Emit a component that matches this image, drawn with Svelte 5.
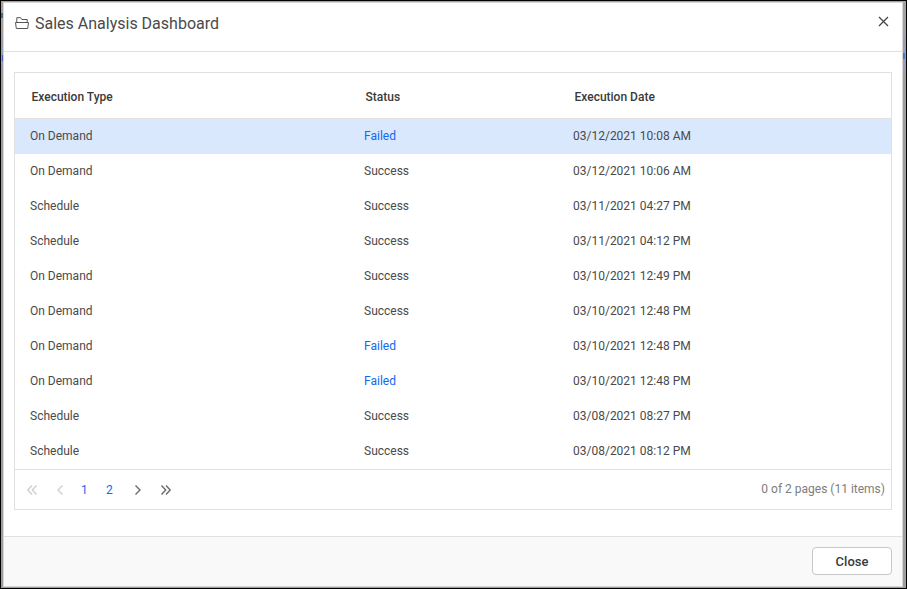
<script>
  const rows = [
    ['On Demand', 'Failed', '03/12/2021 10:08 AM'],
    ['On Demand', 'Success', '03/12/2021 10:06 AM'],
    ['Schedule', 'Success', '03/11/2021 04:27 PM'],
    ['Schedule', 'Success', '03/11/2021 04:12 PM'],
    ['On Demand', 'Success', '03/10/2021 12:49 PM'],
    ['On Demand', 'Success', '03/10/2021 12:48 PM'],
    ['On Demand', 'Failed', '03/10/2021 12:48 PM'],
    ['On Demand', 'Failed', '03/10/2021 12:48 PM'],
    ['Schedule', 'Success', '03/08/2021 08:27 PM'],
    ['Schedule', 'Success', '03/08/2021 08:12 PM']
  ];
  let selected = $state(0);
</script>

<div class="window">
  <div class="dialog">
    <header>
      <svg class="folder" width="14" height="13" viewBox="0 0 14 13" fill="none" stroke="#555" stroke-linejoin="round">
        <path d="M1.8 5.5V.7H5.6L6.8 2.5H12.2V5.5M.5 5.5H13.5L12.7 11.5H1.3Z" />
      </svg>
      <h1>Sales Analysis Dashboard</h1>
      <button class="x" aria-label="Close dialog">
        <svg width="11" height="11" viewBox="0 0 11 11" fill="none" stroke="#444" stroke-width="1.25"><path d="M1 1L10 10M10 1L1 10" /></svg>
      </button>
    </header>
    <main>
      <div class="grid">
        <div class="row head">
          <span>Execution Type</span><span>Status</span><span>Execution Date</span>
        </div>
        {#each rows as [type, status, date], i}
          <div class="row" class:selected={i === selected}>
            <span>{type}</span><span class:failed={status === 'Failed'}>{status}</span><span>{date}</span>
          </div>
        {/each}
        <div class="pager">
          <svg class="first" width="12" height="12" viewBox="0 0 12 12"><path d="M6 1.5L1.8 6L6 10.5M10.5 1.5L6.3 6L10.5 10.5" /></svg>
          <svg class="prev" width="8" height="12" viewBox="0 0 8 12"><path d="M6.5 1.5L2 6L6.5 10.5" /></svg>
          <span class="num one">1</span>
          <span class="num two">2</span>
          <svg class="next" width="8" height="12" viewBox="0 0 8 12"><path d="M1.5 1.5L6 6L1.5 10.5" /></svg>
          <svg class="last" width="12" height="12" viewBox="0 0 12 12"><path d="M1.5 1.5L5.7 6L1.5 10.5M6 1.5L10.2 6L6 10.5" /></svg>
          <span class="info">0 of 2 pages (11 items)</span>
        </div>
      </div>
    </main>
    <footer><button class="close">Close</button></footer>
  </div>
</div>

<style>
  .window {
    box-sizing: border-box;
    width: 907px;
    height: 589px;
    border: 1px solid #000;
    padding: 1px 3px 1px 2px;
    background:
      linear-gradient(#3f6d92, #3f6d92) 0 12px / 2px 5px no-repeat,
      linear-gradient(#4a5fc4, #4a5fc4) 1px 54px / 1px 6px no-repeat,
      linear-gradient(#8a6a4c, #8a6a4c) 902px 52px / 1px 6px no-repeat,
      linear-gradient(#4d7fc0, #4d7fc0) 903px 52px / 1px 6px no-repeat,
      linear-gradient(#a3a1a2 0 36px, #96a0ae 36px 72px, #a09d9d 72px);
    font-family: Roboto, sans-serif;
    font-size: 12px;
    color: #4a4a4a;
  }
  .dialog {
    box-sizing: border-box;
    width: 900px;
    height: 585px;
    border: 1px solid #d7d5d6;
    background: #fff;
    display: flex;
    flex-direction: column;
  }
  header {
    box-sizing: border-box;
    height: 49px;
    flex: none;
    display: flex;
    align-items: flex-start;
    padding: 14px 13px 0 11px;
    border-bottom: 1px solid #e0e0e0;
  }
  h1 {
    margin: -3px 0 0 6px;
    font-size: 16px;
    line-height: 19px;
    font-weight: 400;
  }
  .x {
    margin: -1px 0 0 auto;
    padding: 0;
    border: 0;
    background: none;
    line-height: 0;
  }
  main { flex: 1; padding: 20px 10px 0; }
  .grid { border: 1px solid #e0e0e0; }
  .row {
    display: grid;
    grid-template-columns: 334px 209px 1fr;
    height: 35px;
    line-height: 34px;
    padding-left: 15px;
  }
  .head {
    box-sizing: border-box;
    height: 46px;
    line-height: 48px;
    padding-left: 16.5px;
    border-bottom: 1px solid #e0e0e0;
    font-weight: 500;
    color: #3a3a3a;
  }
  .selected { background: #dae8fe; }
  .failed { color: #1168f5; }
  .pager {
    display: flex;
    align-items: center;
    height: 39px;
    border-top: 1px solid #e0e0e0;
    padding: 0 6px 0 11px;
  }
  .pager svg { fill: none; stroke: #6a6a6a; stroke-width: 1.4; flex: none; }
  .pager .first, .pager .prev { stroke: #cfcfcf; }
  .prev { margin-left: 18px; }
  .num { color: #1168f5; width: 7px; }
  .one { margin-left: 17px; }
  .two { margin-left: 18px; }
  .next { margin-left: 21px; }
  .last { margin-left: 18px; }
  .info { margin-left: auto; padding-bottom: 2px; color: #7d7d7d; }
  footer {
    box-sizing: border-box;
    height: 50px;
    flex: none;
    border-top: 1px solid #e0e0e0;
    background: #f9f9f9;
    display: flex;
    justify-content: flex-end;
    padding: 10px 10px 0 0;
  }
  .close {
    box-sizing: border-box;
    width: 80px;
    height: 28px;
    padding: 0;
    border: 1px solid #c8c8c8;
    border-radius: 4px;
    background: #fff;
    color: #3a3a3a;
    font: 500 13px Roboto, sans-serif;
  }
</style>
